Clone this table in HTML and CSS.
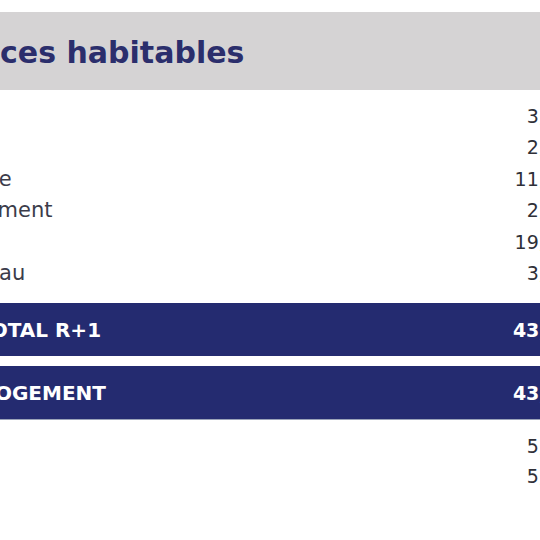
FILE: index.html
```html
<!DOCTYPE html>
<html lang="fr">
<head>
    <meta charset="UTF-8">
    <meta name="viewport" content="width=device-width, initial-scale=1.0">
    <title>Surfaces habitables</title>
    <link rel="stylesheet" href="styles.css">
</head>
<body>
    <div class="sheet">
        <div class="title">Surfaces habitables</div>
        <div class="rows">
            <div class="row"><span class="label">Palier</span><span class="value">3,52</span></div>
            <div class="row"><span class="label">WC</span><span class="value">2,10</span></div>
            <div class="row"><span class="label">Chambre</span><span class="value">11,74</span></div>
            <div class="row"><span class="label">Dégagement</span><span class="value">2,88</span></div>
            <div class="row"><span class="label">Bain</span><span class="value">19,60</span></div>
            <div class="row"><span class="label">Un bureau</span><span class="value">3,45</span></div>
        </div>
        <div class="total"><span class="label">SOUS–TOTAL R+1</span><span class="value">43,29</span></div>
        <div class="total"><span class="label">TOTAL LOGEMENT</span><span class="value">43,29</span></div>
        <div class="rows annex">
            <div class="row"><span class="label">Cave</span><span class="value">5,12</span></div>
            <div class="row"><span class="label">Balcon</span><span class="value">5,80</span></div>
        </div>
    </div>
</body>
</html>
```
FILE: styles.css
```css
body{
    margin: 0;
    background: #fff;
    overflow: hidden;
    font-family: "DejaVu Sans", sans-serif;
}
.sheet{
    width: 720px;
    margin: 12px 0 0 -120px;
}
.title{
    height: 78px;
    display: flex;
    align-items: center;
    padding: 2px 0 0 29px;
    background-color: #d5d3d4;
    color: #2b2e6c;
    font-size: 30px;
    font-weight: bold;
    box-sizing: border-box;
}
.rows{
    padding: 10px 0 14px;
}
.row{
    height: 31.5px;
    display: flex;
    align-items: center;
    justify-content: space-between;
    padding: 0 31px 0 36px;
    font-size: 21px;
    color: #3b3c4a;
}
.row .value{
    font-size: 19px;
    color: #2f3038;
}
.total{
    height: 53px;
    display: flex;
    align-items: center;
    justify-content: space-between;
    padding: 0 27px 0 25px;
    margin-bottom: 10px;
    background-color: #242b70;
    color: #fff;
    font-size: 20px;
    font-weight: bold;
}
.total .value{
    font-size: 19px;
}
.total + .total{
    margin-bottom: 0;
    border-bottom: 1px solid #9aa3b8;
}
.annex{
    padding-top: 11px;
}
.annex .row{
    height: 30px;
}
```
